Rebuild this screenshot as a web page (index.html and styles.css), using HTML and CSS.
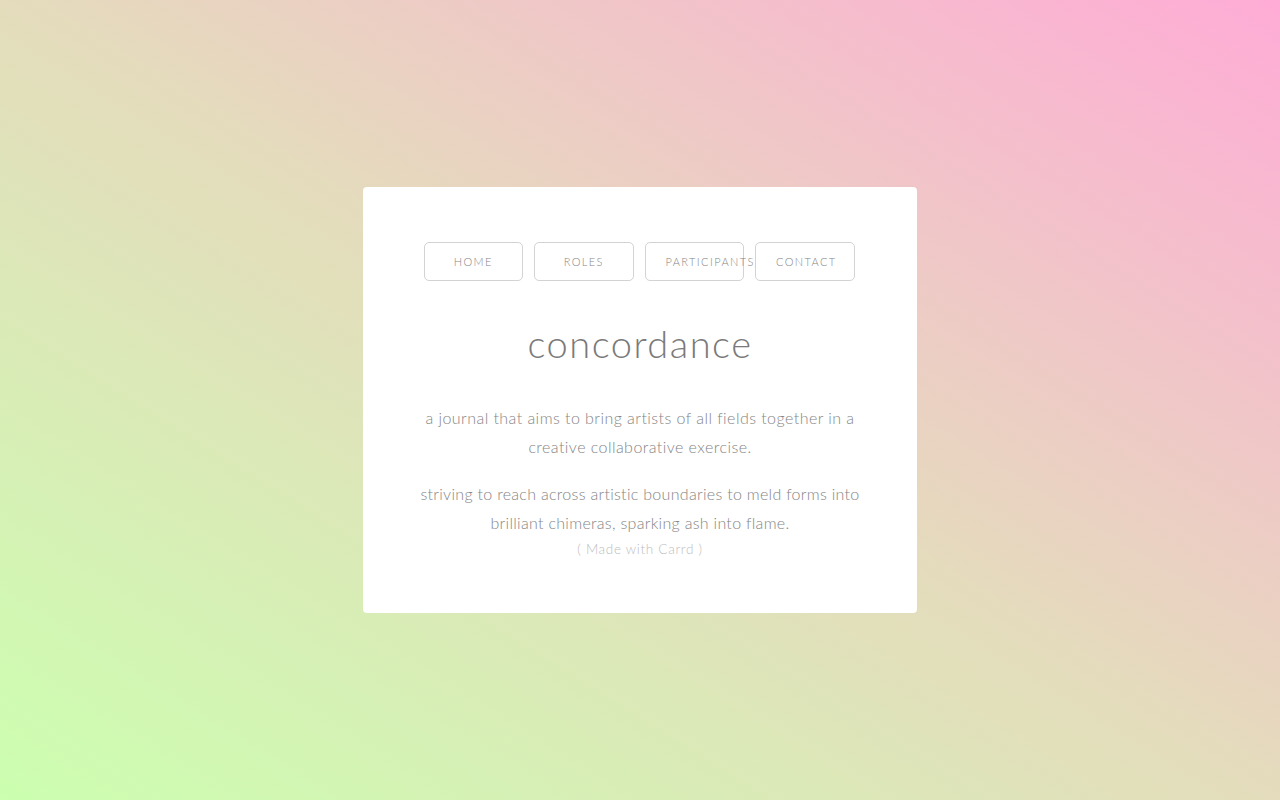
FILE: index.html
```html
<!DOCTYPE html>
<html lang="en">
<head>
<meta charset="utf-8">
<title>concordance</title>
<link rel="stylesheet" href="styles.css">
</head>
<body>
<div class="page">
  <main class="card">
    <nav class="nav">
      <a class="btn" href="#">HOME</a>
      <a class="btn" href="#">ROLES</a>
      <a class="btn" href="#">PARTICIPANTS</a>
      <a class="btn" href="#">CONTACT</a>
    </nav>
    <h1 class="title">concordance</h1>
    <p class="text">a journal that aims to bring artists of all fields together in a creative collaborative exercise.</p>
    <p class="text second">striving to reach across artistic boundaries to meld forms into brilliant chimeras, sparking ash into flame.</p>
    <p class="credit">( Made with Carrd )</p>
  </main>
</div>
</body>
</html>
```

FILE: styles.css
```css
html, body {
  margin: 0;
  padding: 0;
  height: 100%;
}
body {
  background: linear-gradient(to top right, #ccffb0 0%, #e4dcbc 50%, #ffacd6 100%);
  font-family: "Lato", "Open Sans", sans-serif;
}
.page {
  min-height: 100vh;
  display: flex;
  align-items: center;
  justify-content: center;
}
.card {
  box-sizing: border-box;
  width: 554px;
  height: 426px;
  background: #fff;
  border-radius: 4px;
  padding: 55px 50px 0;
  display: flex;
  flex-direction: column;
  align-items: center;
}
.nav {
  display: flex;
  gap: 11px;
  margin-left: -2px;
}
.btn {
  box-sizing: border-box;
  display: block;
  width: 99.5px;
  height: 39px;
  border: 1px solid #d3d3d3;
  border-radius: 5px;
  padding: 0 20px;
  text-align: center;
  line-height: 37px;
  font-size: 11px;
  font-weight: 300;
  letter-spacing: 1.4px;
  color: #858585;
  text-decoration: none;
  white-space: nowrap;
}
.title {
  margin: 36px 0 0;
  font-weight: 300;
  font-size: 38px;
  line-height: 52px;
  letter-spacing: 1.5px;
  color: #7a7a7a;
}
.text {
  margin: 34px 0 0;
  width: 450px;
  text-align: center;
  font-weight: 300;
  font-size: 16px;
  line-height: 29px;
  letter-spacing: 0.45px;
  color: #858585;
}
.text.second {
  margin-top: 18px;
  letter-spacing: 0.3px;
}
.credit {
  margin: 0;
  font-weight: 300;
  font-size: 13.5px;
  line-height: 24px;
  letter-spacing: 0.7px;
  color: #bdbdbd;
}
```
